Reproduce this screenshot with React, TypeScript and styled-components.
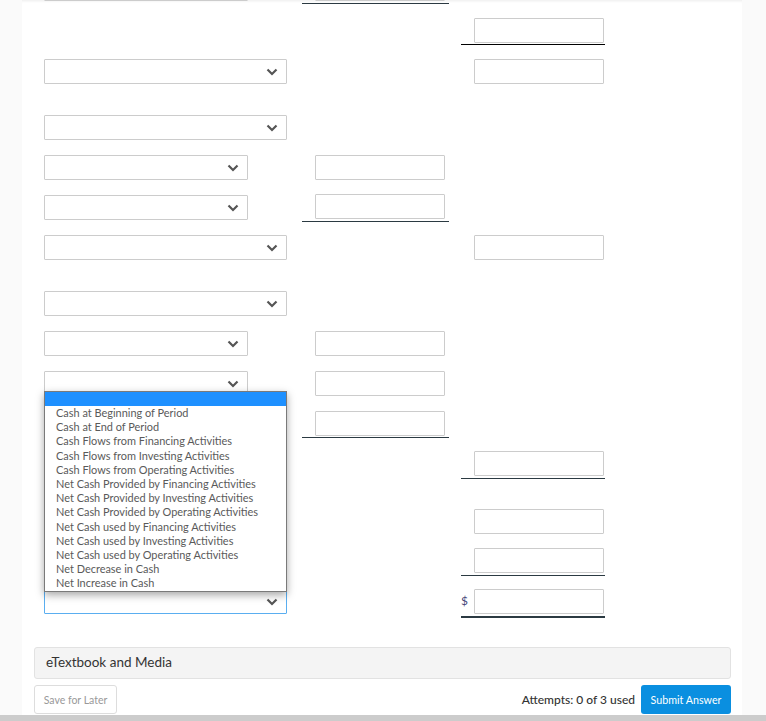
import React from 'react';
import styled, { createGlobalStyle } from 'styled-components';

type RowSpec = {
  height: number;
  select?: 'wide' | 'narrow';
  amount?: boolean;
  total?: boolean;
  amountRule?: boolean;
  totalRule?: 'thin' | 'black' | 'double';
  tightRule?: boolean;
  raised?: boolean;
  focused?: boolean;
};

const rows: RowSpec[] = [
  { height: 42, select: 'narrow', amount: true, amountRule: true },
  { height: 41, total: true, totalRule: 'black', tightRule: true },
  { height: 56, select: 'wide', total: true },
  { height: 40, select: 'wide' },
  { height: 40, select: 'narrow', amount: true },
  { height: 40, select: 'narrow', amount: true, amountRule: true, raised: true },
  { height: 56, select: 'wide', total: true },
  { height: 40, select: 'wide' },
  { height: 40, select: 'narrow', amount: true },
  { height: 40, select: 'narrow', amount: true },
  { height: 40, select: 'narrow', amount: true, amountRule: true, tightRule: true },
  { height: 58, total: true, totalRule: 'thin' },
  { height: 39, total: true },
  { height: 41, total: true, totalRule: 'thin' },
  { height: 58, select: 'wide', total: true, totalRule: 'double', focused: true },
];

const options = [
  'Cash at Beginning of Period',
  'Cash at End of Period',
  'Cash Flows from Financing Activities',
  'Cash Flows from Investing Activities',
  'Cash Flows from Operating Activities',
  'Net Cash Provided by Financing Activities',
  'Net Cash Provided by Investing Activities',
  'Net Cash Provided by Operating Activities',
  'Net Cash used by Financing Activities',
  'Net Cash used by Investing Activities',
  'Net Cash used by Operating Activities',
  'Net Decrease in Cash',
  'Net Increase in Cash',
];

const Chevron = () => (
  <ChevronIcon viewBox="0 0 12 8" aria-hidden="true">
    <path d="M1.5 1.5 L6 6 L10.5 1.5" fill="none" stroke="#555" strokeWidth="2.2" />
  </ChevronIcon>
);

const App = () => {
  return (
    <Page>
      <GlobalStyle />
      <Sheet>
        <Form>
          {rows.map((row, index) => (
            <Row key={index} $height={row.height}>
              <div>
                {row.select && (
                  <SelectBox $size={row.select} $focused={row.focused}>
                    <Chevron />
                    {row.focused && (
                      <OptionList>
                        <BlankOption />
                        {options.map((option) => (
                          <Option key={option}>{option}</Option>
                        ))}
                      </OptionList>
                    )}
                  </SelectBox>
                )}
              </div>
              <AmountCell $ruled={row.amountRule} $tight={row.tightRule} $raised={row.raised}>
                {row.amount && <ValueInput />}
              </AmountCell>
              <TotalCell $rule={row.totalRule} $tight={row.tightRule}>
                {row.totalRule === 'double' && <Dollar>$</Dollar>}
                {row.total && <ValueInput />}
              </TotalCell>
            </Row>
          ))}
        </Form>
        <Accordion>eTextbook and Media</Accordion>
        <Footer>
          <SaveButton>Save for Later</SaveButton>
          <Attempts>Attempts: 0 of 3 used</Attempts>
          <SubmitButton>Submit Answer</SubmitButton>
        </Footer>
      </Sheet>
      <BottomBar />
    </Page>
  );
};

export default App;

const GlobalStyle = createGlobalStyle`
  html, body {
    margin: 0;
    height: 100%;
    overflow: hidden;
    background: #fafafa;
    font-family: Lato, "Liberation Sans", sans-serif;
  }
`;

const Page = styled.div`
  display: flex;
  flex-direction: column;
  height: 721px;
  overflow: hidden;
`;

const Sheet = styled.div`
  flex: 1;
  min-height: 0;
  width: 720px;
  margin-left: 22px;
  padding: 0 11px 0 12px;
  box-sizing: border-box;
  background: #fff;
  box-shadow: inset 0 3px 3px -2px rgba(0, 0, 0, 0.08);
`;

const Form = styled.div`
  margin-top: -24px;
  padding-left: 10px;
`;

const Row = styled.div<{ $height: number }>`
  display: grid;
  grid-template-columns: 258px 147px 12px 144px;
  height: ${(p) => p.$height}px;
  align-items: start;

  > :nth-child(3) {
    grid-column: 4;
  }
`;

const SelectBox = styled.div<{ $size: 'wide' | 'narrow'; $focused?: boolean }>`
  position: relative;
  display: flex;
  align-items: center;
  justify-content: flex-end;
  box-sizing: border-box;
  width: ${(p) => (p.$size === 'wide' ? 243 : 204)}px;
  height: 25px;
  padding-right: 8px;
  background: #fff;
  border: 1px solid ${(p) => (p.$focused ? '#5aaef0' : '#ccc')};
  border-radius: 1px;
`;

const ChevronIcon = styled.svg`
  width: 12px;
  height: 8px;
  margin-top: 1px;
`;

const OptionList = styled.div`
  position: absolute;
  left: -1px;
  right: -1px;
  bottom: calc(100% - 2px);
  box-sizing: border-box;
  height: 201px;
  background: #fff;
  border: 1px solid #7a7a7a;
  box-shadow: 0 3px 8px rgba(0, 0, 0, 0.35);
  z-index: 2;
`;

const BlankOption = styled.div`
  height: 14px;
  background: #1e90ff;
`;

const Option = styled.div`
  height: 14.2px;
  padding-left: 11px;
  font-size: 10.95px;
  line-height: 14.2px;
  color: #5a5a5a;
  white-space: nowrap;
`;

const AmountCell = styled.div<{ $ruled?: boolean; $tight?: boolean; $raised?: boolean }>`
  display: flex;
  padding-left: 13px;
  margin-top: ${(p) => (p.$raised ? -1 : 0)}px;
  padding-bottom: ${(p) => (!p.$ruled ? 0 : p.$tight ? 1 : 2)}px;
  border-bottom: ${(p) => (p.$ruled ? '1px solid #2b3a42' : 'none')};
`;

const ruleStyles = {
  thin: '1px solid #2b3a42',
  black: '1px solid #000',
  double: '2px solid #2b3a42',
};

const TotalCell = styled.div<{ $rule?: 'thin' | 'black' | 'double'; $tight?: boolean }>`
  position: relative;
  display: flex;
  padding-left: 13px;
  padding-bottom: ${(p) => (!p.$rule ? 0 : p.$tight ? 1 : 2)}px;
  border-bottom: ${(p) => (p.$rule ? ruleStyles[p.$rule] : 'none')};
`;

const ValueInput = styled.input.attrs({ type: 'text' })`
  box-sizing: border-box;
  width: 130px;
  height: 25px;
  margin: 0;
  padding: 0;
  background: #fff;
  border: 1px solid #ccc;
  border-radius: 1px;
  outline: none;
`;

const Dollar = styled.span`
  position: absolute;
  left: 0;
  top: 4px;
  font-size: 12px;
  line-height: 15px;
  color: #4a4a7a;
`;

const Accordion = styled.div`
  box-sizing: border-box;
  height: 32px;
  padding-left: 11px;
  font-size: 13.5px;
  line-height: 29px;
  color: #333;
  background: #f4f4f4;
  border: 1px solid #e2e2e2;
  border-radius: 3px;
`;

const Footer = styled.div`
  display: flex;
  align-items: center;
  height: 29px;
  margin-top: 6px;
`;

const SaveButton = styled.button`
  box-sizing: border-box;
  width: 83px;
  height: 29px;
  margin-right: auto;
  padding: 0;
  font-family: inherit;
  font-size: 10.5px;
  color: #999;
  background: #fff;
  border: 1px solid #ddd;
  border-radius: 3px;
`;

const Attempts = styled.span`
  margin-right: 6px;
  font-size: 12px;
  font-weight: 500;
  color: #333;
`;

const SubmitButton = styled.button`
  box-sizing: border-box;
  width: 90px;
  height: 29px;
  padding: 0;
  font-family: inherit;
  font-size: 10.7px;
  color: #fff;
  background: #0a8fe0;
  border: none;
  border-radius: 3px;
`;

const BottomBar = styled.div`
  flex: none;
  height: 6px;
  background: #ccc;
`;
